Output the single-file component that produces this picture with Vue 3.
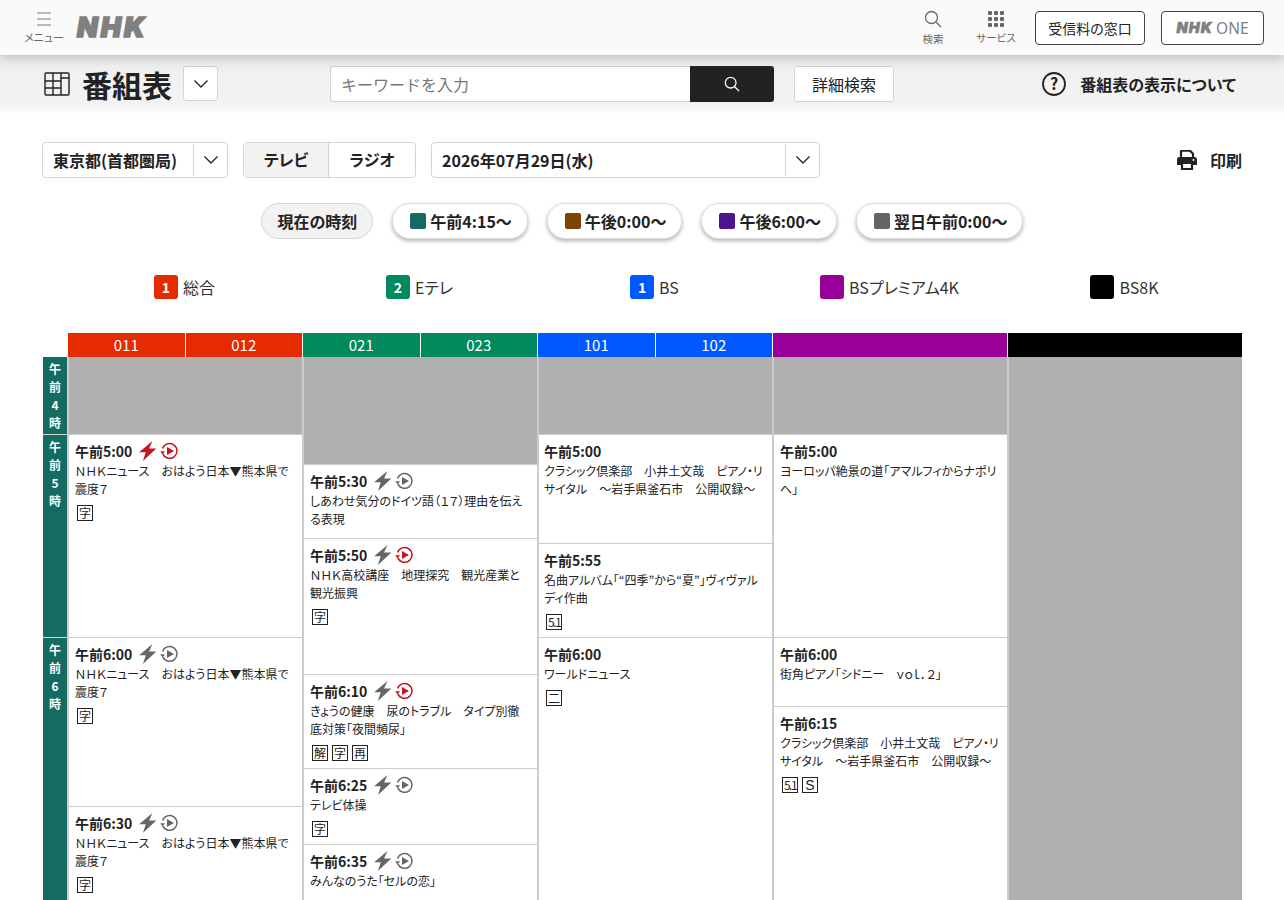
<template>
  <div class="page">
    <svg class="defs" width="0" height="0" aria-hidden="true">
      <symbol id="bolt" viewBox="0 0 16 18">
        <path d="M12 0 L0 10.2 H6 L3.4 18 L15.5 6.8 H9 Z" fill="currentColor" />
      </symbol>
      <symbol id="replay" viewBox="0 0 18 18">
        <path d="M2.6 6.4 A7.4 7.4 0 1 1 2.9 12.2" fill="none" stroke="currentColor" stroke-width="1.5" />
        <path d="M0.2 9.2 H5 L2.6 12.6 Z" fill="currentColor" />
        <path d="M7 5 L14 9 L7 13 Z" fill="currentColor" />
      </symbol>
      <symbol id="chev" viewBox="0 0 16 10">
        <path d="M1.5 1.5 L8 8 L14.5 1.5" fill="none" stroke="currentColor" stroke-width="1.3" />
      </symbol>
    </svg>

    <header class="topbar">
      <div class="menu">
        <svg class="menu-icon" viewBox="0 0 14 14" width="14" height="14">
          <path d="M0 1 H14 M0 7 H14 M0 13 H14" stroke="#777" stroke-width="1" />
        </svg>
        <span>メニュー</span>
      </div>
      <div class="logo">NHK</div>
      <div class="top-right">
        <div class="tool tool-search">
          <svg viewBox="0 0 18 18" width="18" height="18">
            <circle cx="7.5" cy="7.5" r="6" fill="none" stroke="#666" stroke-width="1.3" />
            <path d="M12 12 L17 17" stroke="#666" stroke-width="1.3" />
          </svg>
          <span>検索</span>
        </div>
        <div class="tool tool-service">
          <svg viewBox="0 0 16 16" width="16" height="16">
            <g fill="#666">
              <template v-for="y in [0, 6, 12]" :key="y">
                <rect v-for="x in [0, 6, 12]" :key="x" :x="x" :y="y" width="4" height="4" rx="1" />
              </template>
            </g>
          </svg>
          <span>サービス</span>
        </div>
        <a class="top-btn fee">受信料の窓口</a>
        <a class="top-btn one"><span class="one-mark">NHK</span><span class="one-word">ONE</span></a>
      </div>
    </header>

    <section class="titlebar">
      <svg class="table-icon" viewBox="0 0 26 24" width="26" height="24">
        <g fill="none" stroke="#222" stroke-width="1.4">
          <rect x="1" y="1" width="24" height="22" rx="1" />
          <path d="M9 1 V23 M17 1 V23 M1 9 H17 M1 16 H17 M17 6 H25" />
        </g>
      </svg>
      <h1>番組表</h1>
      <div class="title-drop"><svg width="16" height="10"><use href="#chev" /></svg></div>
      <div class="search">
        <input class="search-input" type="text" placeholder="キーワードを入力" />
        <div class="search-btn">
          <svg viewBox="0 0 18 18" width="16" height="16">
            <circle cx="7.5" cy="7.5" r="6" fill="none" stroke="#fff" stroke-width="1.5" />
            <path d="M12 12 L17 17" stroke="#fff" stroke-width="1.5" />
          </svg>
        </div>
      </div>
      <div class="detail">詳細検索</div>
      <div class="about">
        <svg viewBox="0 0 24 24" width="24" height="24">
          <circle cx="12" cy="12" r="11" fill="none" stroke="#222" stroke-width="1.8" />
          <text x="12" y="17.5" text-anchor="middle" class="q">?</text>
        </svg>
        <span>番組表の表示について</span>
      </div>
    </section>

    <section class="filters">
      <div class="select area">
        <span class="select-text">東京都(首都圏局)</span>
        <span class="select-arrow"><svg width="16" height="10"><use href="#chev" /></svg></span>
      </div>
      <div class="toggle">
        <span class="on">テレビ</span>
        <span>ラジオ</span>
      </div>
      <div class="select date">
        <span class="select-text">2026年07月29日(水)</span>
        <span class="select-arrow"><svg width="16" height="10"><use href="#chev" /></svg></span>
      </div>
      <div class="print">
        <svg viewBox="0 0 20 20" width="20" height="20">
          <path d="M4 8 V1.5 A1 1 0 0 1 5 0.7 H13 L16 3.7 V8" fill="none" stroke="#222" stroke-width="2.2" />
          <path d="M2.5 7 H17.5 A2.5 2.5 0 0 1 20 9.5 V15 H16 V12 H4 V15 H0 V9.5 A2.5 2.5 0 0 1 2.5 7 Z" fill="#222" />
          <path d="M5 13 H15 V19 H5 Z" fill="none" stroke="#222" stroke-width="2.2" />
          <circle cx="16.5" cy="10" r="1" fill="#fff" />
        </svg>
        <span>印刷</span>
      </div>
    </section>

    <nav class="jumps">
      <span class="pill now">現在の時刻</span>
      <span v-for="j in jumps" :key="j.label" class="pill">
        <i :style="{ background: j.color }"></i>{{ j.label }}
      </span>
    </nav>

    <div class="legend">
      <div v-for="l in legend" :key="l.name" class="legend-item">
        <b :style="{ background: l.color }">{{ l.num }}</b>
        <span>{{ l.name }}</span>
      </div>
    </div>

    <div class="grid-head">
      <div v-for="c in heads" :key="c.color" class="head" :style="{ background: c.color }">
        <span v-for="n in c.nums" :key="n">{{ n }}</span>
      </div>
    </div>

    <div class="grid">
      <div class="hours">
        <div v-for="h in hours" :key="h.num" class="hour" :style="{ height: h.height + 'px' }">
          <span>午</span><span>前</span><span>{{ h.num }}</span><span>時</span>
        </div>
      </div>
      <div v-for="(col, i) in columns" :key="i" class="col">
        <template v-for="p in col" :key="p.time || p.height">
          <div v-if="!p.time" class="blank" :style="{ height: p.height + 'px' }"></div>
          <div v-else class="prog" :style="{ height: p.height + 'px' }">
            <div class="prog-head">
              <span class="time">{{ p.time }}</span>
              <svg v-if="p.icons" class="bolt" :class="{ red: p.redBolt }" width="18" height="20"><use href="#bolt" /></svg>
              <svg v-if="p.icons" class="replay" :class="{ red: p.redPlay }" width="18" height="18"><use href="#replay" /></svg>
            </div>
            <p class="desc">{{ p.desc }}</p>
            <div v-if="p.tags" class="tags">
              <span v-for="t in p.tags" :key="t" class="tag" :class="{ small: t === '5.1', latin: t === 'S' }">{{ t }}</span>
            </div>
          </div>
        </template>
      </div>
    </div>
  </div>
</template>

<script setup>
const jumps = [
  { label: '午前4:15〜', color: '#136b62' },
  { label: '午後0:00〜', color: '#7f4500' },
  { label: '午後6:00〜', color: '#4d1490' },
  { label: '翌日午前0:00〜', color: '#646464' },
]

const legend = [
  { num: '1', name: '総合', color: '#e62b00' },
  { num: '2', name: 'Eテレ', color: '#008a5e' },
  { num: '1', name: 'BS', color: '#0059ff' },
  { num: '', name: 'BSプレミアム4K', color: '#990099' },
  { num: '', name: 'BS8K', color: '#000' },
]

const heads = [
  { color: '#e62b00', nums: ['011', '012'] },
  { color: '#008a5e', nums: ['021', '023'] },
  { color: '#0059ff', nums: ['101', '102'] },
  { color: '#990099', nums: [] },
  { color: '#000', nums: [] },
]

const hours = [
  { num: '4', height: 77 },
  { num: '5', height: 203 },
  { num: '6', height: 263 },
]

const news = 'ＮＨＫニュース　おはよう日本▼熊本県で震度７'
const recital = 'クラシック倶楽部　小井土文哉　ピアノ・リサイタル　～岩手県釜石市　公開収録～'

const columns = [
  [
    { height: 77 },
    { time: '午前5:00', height: 203, icons: true, redBolt: true, redPlay: true, desc: news, tags: ['字'] },
    { time: '午前6:00', height: 169, icons: true, desc: news, tags: ['字'] },
    { time: '午前6:30', height: 94, icons: true, desc: news, tags: ['字'] },
  ],
  [
    { height: 107 },
    { time: '午前5:30', height: 74, icons: true, desc: 'しあわせ気分のドイツ語（１７）理由を伝える表現' },
    { time: '午前5:50', height: 136, icons: true, redPlay: true, desc: 'ＮＨＫ高校講座　地理探究　観光産業と観光振興', tags: ['字'] },
    { time: '午前6:10', height: 94, icons: true, redPlay: true, desc: 'きょうの健康　尿のトラブル　タイプ別徹底対策「夜間頻尿」', tags: ['解', '字', '再'] },
    { time: '午前6:25', height: 76, icons: true, desc: 'テレビ体操', tags: ['字'] },
    { time: '午前6:35', height: 56, icons: true, desc: 'みんなのうた「セルの恋」' },
  ],
  [
    { height: 77 },
    { time: '午前5:00', height: 109, desc: recital },
    { time: '午前5:55', height: 94, desc: '名曲アルバム「“四季”から“夏”」ヴィヴァルディ作曲', tags: ['5.1'] },
    { time: '午前6:00', height: 263, desc: 'ワールドニュース', tags: ['二'] },
  ],
  [
    { height: 77 },
    { time: '午前5:00', height: 203, desc: 'ヨーロッパ絶景の道「アマルフィからナポリへ」' },
    { time: '午前6:00', height: 69, desc: '街角ピアノ「シドニー　ｖｏｌ．２」' },
    { time: '午前6:15', height: 194, desc: recital, tags: ['5.1', 'S'] },
  ],
  [{ height: 543 }],
]
</script>

<style>
html, body {
  margin: 0;
  background: #fff;
}
</style>

<style scoped>
.page {
  height: 900px;
  overflow: hidden;
  position: relative;
  color: #222;
  font-family: "Noto Sans CJK JP", "Noto Sans", sans-serif;
  font-feature-settings: "palt";
}

.defs {
  position: absolute;
}

/* 上部バー */
.topbar {
  position: relative;
  z-index: 2;
  display: flex;
  align-items: center;
  height: 55px;
  padding: 0 20px 0 24px;
  background: #fafafa;
  box-shadow: 0 2px 12px rgba(0, 0, 0, 0.25);
}

.menu {
  width: 40px;
  display: flex;
  flex-direction: column;
  align-items: center;
  gap: 5px;
  color: #666;
  font-size: 11px;
  line-height: 12px;
}

.logo {
  margin-left: 13px;
  font-family: "Inter", "Liberation Sans", sans-serif;
  font-size: 27px;
  font-weight: 900;
  font-style: italic;
  line-height: 32px;
  color: #808080;
  letter-spacing: 3px;
  -webkit-text-stroke: 1.6px #808080;
}

.top-right {
  margin-left: auto;
  display: flex;
  align-items: center;
}

.tool {
  display: flex;
  flex-direction: column;
  align-items: center;
  gap: 5px;
  width: 44px;
  color: #666;
  font-size: 10.5px;
  line-height: 12px;
}

.tool-service {
  margin-left: 19px;
}

.top-btn {
  box-sizing: border-box;
  display: flex;
  align-items: center;
  justify-content: center;
  height: 34px;
  background: #fff;
  border: 1px solid #444;
  border-radius: 4px;
  font-size: 14px;
}

.fee {
  width: 110px;
  margin-left: 17px;
}

.one {
  width: 103px;
  margin-left: 16px;
  gap: 3px;
  color: #808080;
}

.one-mark {
  font-family: "Inter", "Liberation Sans", sans-serif;
  font-size: 14.5px;
  font-weight: 900;
  font-style: italic;
  letter-spacing: 1.2px;
  -webkit-text-stroke: 0.6px #808080;
}

.one-word {
  font-family: "Noto Sans", sans-serif;
  font-size: 15.5px;
}

/* タイトル */
.titlebar {
  display: flex;
  align-items: center;
  height: 60px;
  margin-bottom: -3px;
  padding: 0 48px 3px 44px;
  box-sizing: border-box;
  background: linear-gradient(#efefef 0, #f3f3f3 82%, #fff 100%);
}

.table-icon {
  flex: none;
}

h1 {
  margin: 0 0 0 12px;
  width: 101px;
  font-size: 30px;
  line-height: 36px;
  font-weight: 700;
}

.title-drop {
  box-sizing: border-box;
  display: flex;
  align-items: center;
  justify-content: center;
  width: 35px;
  height: 35px;
  background: #fff;
  border: 1px solid #d4d4d4;
  border-radius: 3px;
  color: #222;
}

.search {
  display: flex;
  height: 36px;
  margin-left: 112px;
}

.search-input {
  box-sizing: border-box;
  width: 360px;
  height: 36px;
  padding: 0 10px;
  border: 1px solid #d4d4d4;
  border-right: 0;
  border-radius: 3px 0 0 3px;
  background: #fff;
  font-family: inherit;
  font-size: 16px;
  outline: none;
}

.search-input::placeholder {
  color: #777;
}

.search-btn {
  display: flex;
  align-items: center;
  justify-content: center;
  width: 84px;
  background: #222;
  border-radius: 0 3px 3px 0;
}

.detail {
  box-sizing: border-box;
  display: flex;
  align-items: center;
  justify-content: center;
  width: 100px;
  height: 36px;
  margin-left: 20px;
  background: #fff;
  border: 1px solid #d4d4d4;
  border-radius: 3px;
  font-size: 16px;
}

.about {
  margin-left: auto;
  display: flex;
  align-items: center;
  gap: 14px;
  font-size: 16px;
  font-weight: 700;
}

.q {
  font-size: 16px;
  font-weight: 700;
  fill: #222;
}

/* 絞り込み */
.filters {
  display: flex;
  align-items: center;
  height: 36px;
  margin-top: 30px;
  padding: 0 42px;
}

.select {
  box-sizing: border-box;
  display: flex;
  align-items: stretch;
  height: 36px;
  background: #fff;
  border: 1px solid #d4d4d4;
  border-radius: 4px;
  font-size: 16px;
  font-weight: 700;
}

.select-text {
  flex: 1;
  padding-left: 10px;
  line-height: 35px;
}

.select-arrow {
  display: flex;
  align-items: center;
  justify-content: center;
  width: 33px;
  margin: 1px 0;
  border-left: 1px solid #d4d4d4;
}

.area {
  width: 186px;
}

.toggle {
  box-sizing: border-box;
  display: flex;
  width: 173px;
  height: 36px;
  margin-left: 15px;
  border: 1px solid #d4d4d4;
  border-radius: 4px;
  font-size: 16px;
  font-weight: 700;
  text-align: center;
  line-height: 33px;
}

.toggle span {
  flex: 1;
}

.toggle .on {
  flex: none;
  width: 84px;
  background: #f2f2f2;
  border-right: 1px solid #d4d4d4;
}

.date {
  width: 389px;
  margin-left: 15px;
}

.print {
  margin-left: auto;
  display: flex;
  align-items: center;
  gap: 13px;
  font-size: 16px;
  font-weight: 700;
}

/* 時間帯ジャンプ */
.jumps {
  display: flex;
  justify-content: center;
  gap: 19px;
  margin-top: 25px;
}

.pill {
  box-sizing: border-box;
  display: flex;
  align-items: center;
  height: 36px;
  padding: 0 15px 0 17px;
  border: 1px solid #ddd;
  border-radius: 18px;
  background: #fff;
  box-shadow: 0 2px 4px rgba(0, 0, 0, 0.3);
  font-size: 16px;
  font-weight: 700;
}

.pill i {
  width: 16px;
  height: 16px;
  margin-right: 4px;
  border-radius: 2px;
}

.pill.now {
  padding: 0 15px 0 16px;
  background: #f2f2f2;
  box-shadow: none;
  border-color: #d4d4d4;
}

/* チャンネル */
.legend {
  display: grid;
  grid-template-columns: repeat(5, 235px);
  margin: 36px 0 0 67px;
}

.legend-item {
  display: flex;
  align-items: center;
  justify-content: center;
  gap: 5px;
  height: 24px;
  font-size: 16px;
  color: #333;
}

.legend-item b {
  display: flex;
  align-items: center;
  justify-content: center;
  width: 24px;
  height: 24px;
  border-radius: 3px;
  color: #fff;
  font-size: 14px;
}

.grid-head {
  display: grid;
  grid-template-columns: repeat(5, 235px);
  margin: 34px 0 0 67px;
}

.head {
  display: flex;
  height: 24px;
  margin-left: 1px;
  color: #fff;
  font-size: 15px;
  line-height: 24px;
  text-align: center;
}

.head span {
  flex: 1;
}

.head span + span {
  border-left: 1px solid #fff;
}

.grid {
  display: flex;
  margin-left: 43px;
}

.hours {
  width: 24px;
  flex: none;
}

.hour {
  box-sizing: border-box;
  display: flex;
  flex-direction: column;
  align-items: center;
  padding-top: 3px;
  background: #136b62;
  color: #fff;
  font-size: 12px;
  font-weight: 700;
  line-height: 18px;
}

.hour + .hour {
  border-top: 1px solid #d4d4d4;
}

.col {
  box-sizing: border-box;
  width: 235px;
  flex: none;
  border-left: 2px solid #ccc;
}

.blank {
  background: #b0b0b0;
}

.prog {
  box-sizing: border-box;
  padding: 5px 7px 0 6px;
  background: #fff;
  border-top: 1px solid #ccc;
}

.col:nth-child(4) .prog,
.col:nth-child(5) .prog {
  padding-left: 5px;
}

.col:nth-child(5) .prog {
  padding-left: 6px;
}

.prog-head {
  display: flex;
  align-items: center;
  height: 22px;
}

.time {
  font-size: 14px;
  font-weight: 700;
  line-height: 22px;
}

.bolt,
.replay {
  color: #666;
}

.bolt {
  margin-left: 7px;
}

.replay {
  margin-left: 3px;
}

.bolt.red,
.replay.red {
  color: #c4151c;
}

.desc {
  margin: 0;
  font-size: 12px;
  line-height: 18px;
  color: #222;
}

.tags {
  display: flex;
  gap: 4px;
  margin: 7px 0 0 2px;
}

.tag {
  box-sizing: border-box;
  width: 16px;
  height: 16px;
  border: 1px solid #222;
  font-size: 12px;
  line-height: 14px;
  text-align: center;
  white-space: nowrap;
}

.tag.small {
  font-size: 12px;
  letter-spacing: -1.5px;
}

.tag.latin {
  font-family: "Liberation Sans", sans-serif;
  font-size: 14px;
}
</style>
